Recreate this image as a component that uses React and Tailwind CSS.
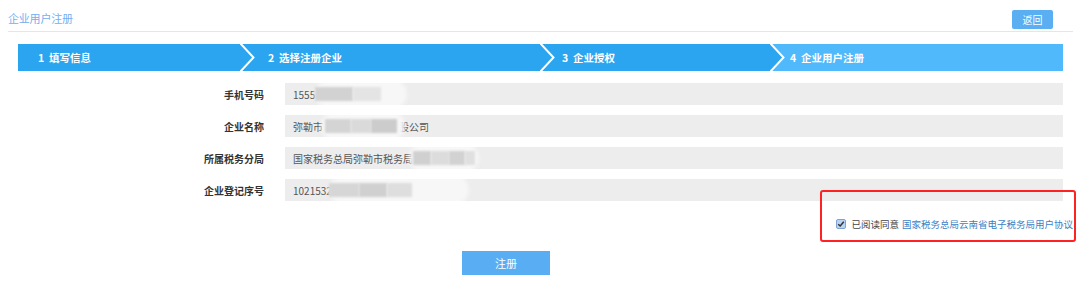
import React from "react";

const font = { fontFamily: '"Noto Sans CJK SC", "Noto Sans", sans-serif' };

function Chevron({ prev }) {
  return (
    <svg width="18" height="27" viewBox="0 0 18 27" className="absolute left-0 top-0">
      <polygon points="0,0 13,13.5 0,27" fill={prev} />
      <polyline points="0,-1 13.5,13.5 0,28" fill="none" stroke="#ffffff" strokeWidth="2" />
    </svg>
  );
}

function Step({ n, label, width, bg, prev, first, textPad }) {
  return (
    <div
      className={`relative h-[27px] flex items-center shrink-0 ${bg}`}
      style={{ width }}
    >
      {!first && <Chevron prev={prev} />}
      <span
        className="text-white font-bold text-[10.5px] whitespace-pre"
        style={{ paddingLeft: textPad }}
      >
        {n}  {label}
      </span>
    </div>
  );
}

function Row({ label, children }) {
  return (
    <div className="flex items-center h-[22px]">
      <div className="w-[256px] text-right text-[10px] font-bold text-[#333]">{label}</div>
      <div className="ml-[21px] w-[778px] h-[22px] bg-[#ededed] relative flex items-center pl-[8px] text-[10px] text-[#555] overflow-hidden">
        {children}
      </div>
    </div>
  );
}

function Blur({ left, width, blocks }) {
  return (
    <div className="absolute top-0 h-[22px]" style={{ left, width }}>
      <div className="absolute inset-x-0 -top-[4px] -bottom-[4px] bg-[#f7f7f7] rounded-full blur-[2px]" />
      {blocks.map((b, i) => (
        <div
          key={i}
          className="absolute top-[4px] h-[14px] blur-[1px]"
          style={{ left: b[0], width: b[1], background: b[2] }}
        />
      ))}
    </div>
  );
}

export default function App() {
  return (
    <div className="w-[1080px] h-[286px] bg-white relative overflow-hidden" style={font}>
      {/* header */}
      <div className="ml-[8px] w-[1065px] h-[32px] border-b border-[#e6e6e6] flex items-start justify-between">
        <div className="mt-[10px] text-[11px] text-[#75aef0] tracking-[-0.2px]">企业用户注册</div>
        <button className="mt-[10px] mr-[20px] w-[41px] h-[19px] bg-[#5aaef2] rounded-[2px] text-white text-[10px] flex items-center justify-center">
          返回
        </button>
      </div>

      {/* steps */}
      <div className="ml-[18px] mt-[12px] flex w-[1045px]">
        <Step n="1" label="填写信息" width={222} bg="bg-[#2ba5ef]" first textPad={20} />
        <Step n="2" label="选择注册企业" width={300} bg="bg-[#2ba5ef]" prev="#2ba5ef" textPad={28} />
        <Step n="3" label="企业授权" width={230} bg="bg-[#2ba5ef]" prev="#2ba5ef" textPad={22} />
        <Step n="4" label="企业用户注册" width={293} bg="bg-[#4fb9fb]" prev="#2ba5ef" textPad={20} />
      </div>

      {/* form */}
      <div className="mt-[12px] ml-[8px] flex flex-col gap-[10px]">
        <Row label="手机号码">
          <span>1555</span>
          <Blur left={30} width={92} blocks={[[0, 38, "#d2d2d2"], [38, 28, "#e4e4e4"]]} />
        </Row>
        <Row label="企业名称">
          <span>弥勒市</span>
          <span className="ml-[76px]">股公司</span>
          <Blur left={36} width={84} blocks={[[4, 26, "#d4d4d4"], [30, 20, "#dadada"], [50, 26, "#cccccc"]]} />
        </Row>
        <Row label="所属税务分局">
          <span>国家税务总局弥勒市税务局</span>
          <Blur left={124} width={70} blocks={[[4, 18, "#d0d0d0"], [22, 18, "#dcdcdc"], [40, 16, "#d2d2d2"], [56, 10, "#e0e0e0"]]} />
        </Row>
        <Row label="企业登记序号">
          <span>1021532</span>
          <Blur left={44} width={140} blocks={[[0, 30, "#d6d6d6"], [30, 28, "#d0d0d0"], [58, 25, "#dedede"]]} />
        </Row>
      </div>

      {/* agreement */}
      <div className="mt-[16px] flex justify-end pr-[7px]">
        <div className="flex items-center h-[14px]">
          <span className="w-[10px] h-[10px] rounded-[2px] bg-[#b9d3f3] border border-[#7ea4d6] flex items-center justify-center">
            <svg width="8" height="8" viewBox="0 0 8 8">
              <polyline points="1.2,4.2 3.2,6 6.8,1.8" fill="none" stroke="#333" strokeWidth="1.5" />
            </svg>
          </span>
          <span className="ml-[5px] text-[9.5px] text-[#444]">已阅读同意</span>
          <span className="ml-[3px] text-[9.5px] text-[#3b7fc6]">国家税务总局云南省电子税务局用户协议</span>
        </div>
      </div>

      {/* red annotation */}
      <div className="absolute left-[820px] top-[190px] w-[256px] h-[52px] border-2 border-[#ff2222] rounded-[3px]" />

      {/* submit */}
      <div className="mt-[20px] ml-[462px]">
        <button className="w-[88px] h-[24px] bg-[#58adf3] text-white text-[11px] flex items-center justify-center">
          注册
        </button>
      </div>
    </div>
  );
}
